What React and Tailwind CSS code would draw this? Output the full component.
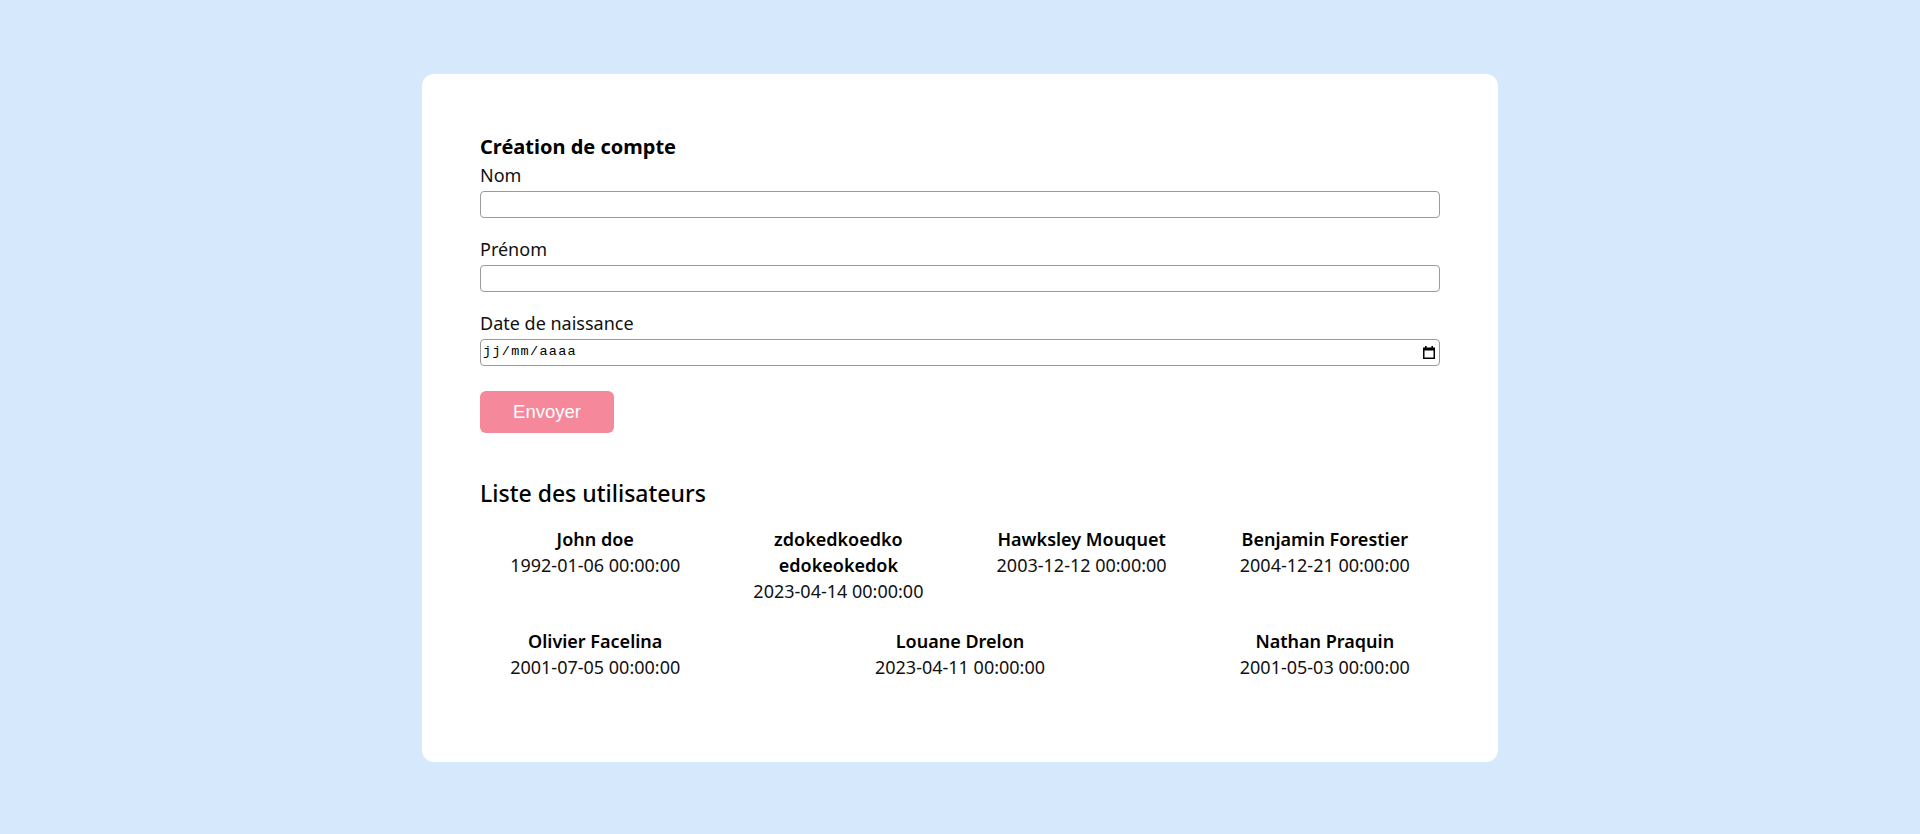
import React from 'react';

// users shown in the list under the form
const users = [
  { name: 'John doe', birth: '1992-01-06 00:00:00' },
  { name: 'zdokedkoedko edokeokedok', birth: '2023-04-14 00:00:00' },
  { name: 'Hawksley Mouquet', birth: '2003-12-12 00:00:00' },
  { name: 'Benjamin Forestier', birth: '2004-12-21 00:00:00' },
  { name: 'Olivier Facelina', birth: '2001-07-05 00:00:00' },
  { name: 'Louane Drelon', birth: '2023-04-11 00:00:00' },
  { name: 'Nathan Praquin', birth: '2001-05-03 00:00:00' },
];

const CalendarIcon = () => (
  <svg width="12" height="13" viewBox="0 0 12 13" aria-hidden="true">
    <rect x="2" y="0" width="1.6" height="2" fill="#000" />
    <rect x="8.4" y="0" width="1.6" height="2" fill="#000" />
    <rect x="0" y="1.5" width="12" height="3" fill="#000" />
    <rect x="0.75" y="3" width="10.5" height="9.25" fill="none" stroke="#000" strokeWidth="1.5" />
  </svg>
);

const Field = ({ label, children, last }) => (
  <div className={last ? 'mb-[25px]' : 'mb-[18px]'}>
    <label className="block text-[18px] leading-[26px] mb-[3px] text-[#111]">{label}</label>
    {children}
  </div>
);

const App = () => {
  return (
    <div className="min-h-screen bg-[#d6e9fc] pt-[74px] font-['Noto_Sans',sans-serif] text-black">
      <div className="mx-auto w-[1076px] rounded-xl bg-white p-[58px]">
        <h3 className="text-[20px] font-bold leading-[29px] mb-[1px]">Création de compte</h3>

        <form onSubmit={(e) => e.preventDefault()}>
          <Field label="Nom">
            <input type="text" className="block w-full h-[27px] rounded-[4px] border border-[#9b9b9b] px-1 outline-none" />
          </Field>
          <Field label="Prénom">
            <input type="text" className="block w-full h-[27px] rounded-[4px] border border-[#9b9b9b] px-1 outline-none" />
          </Field>
          <Field label="Date de naissance" last>
            <div className="flex h-[27px] w-full items-center justify-between rounded-[4px] border border-[#9b9b9b] pl-[2px] pr-[4px]">
              <span className="font-['Liberation_Mono',monospace] text-[13.5px] tracking-[1.3px] text-black">jj/mm/aaaa</span>
              <CalendarIcon />
            </div>
          </Field>

          <button
            type="submit"
            className="h-[42px] w-[134px] rounded-[6px] bg-[#f5899b] font-['Liberation_Sans',Arial,sans-serif] text-[18.5px] text-white"
          >
            Envoyer
          </button>
        </form>

        <h2 className="mt-[44px] text-[23px] font-medium leading-[32px]">Liste des utilisateurs</h2>

        <div className="mt-[17px] flex flex-wrap justify-between">
          {users.map((u) => (
            <div key={u.name} className="w-[24%] mb-6 text-center text-[18px] leading-[26px]">
              <div className="font-semibold">{u.name}</div>
              <div className="text-[#111]">{u.birth}</div>
            </div>
          ))}
        </div>
      </div>
    </div>
  );
};

export default App;
